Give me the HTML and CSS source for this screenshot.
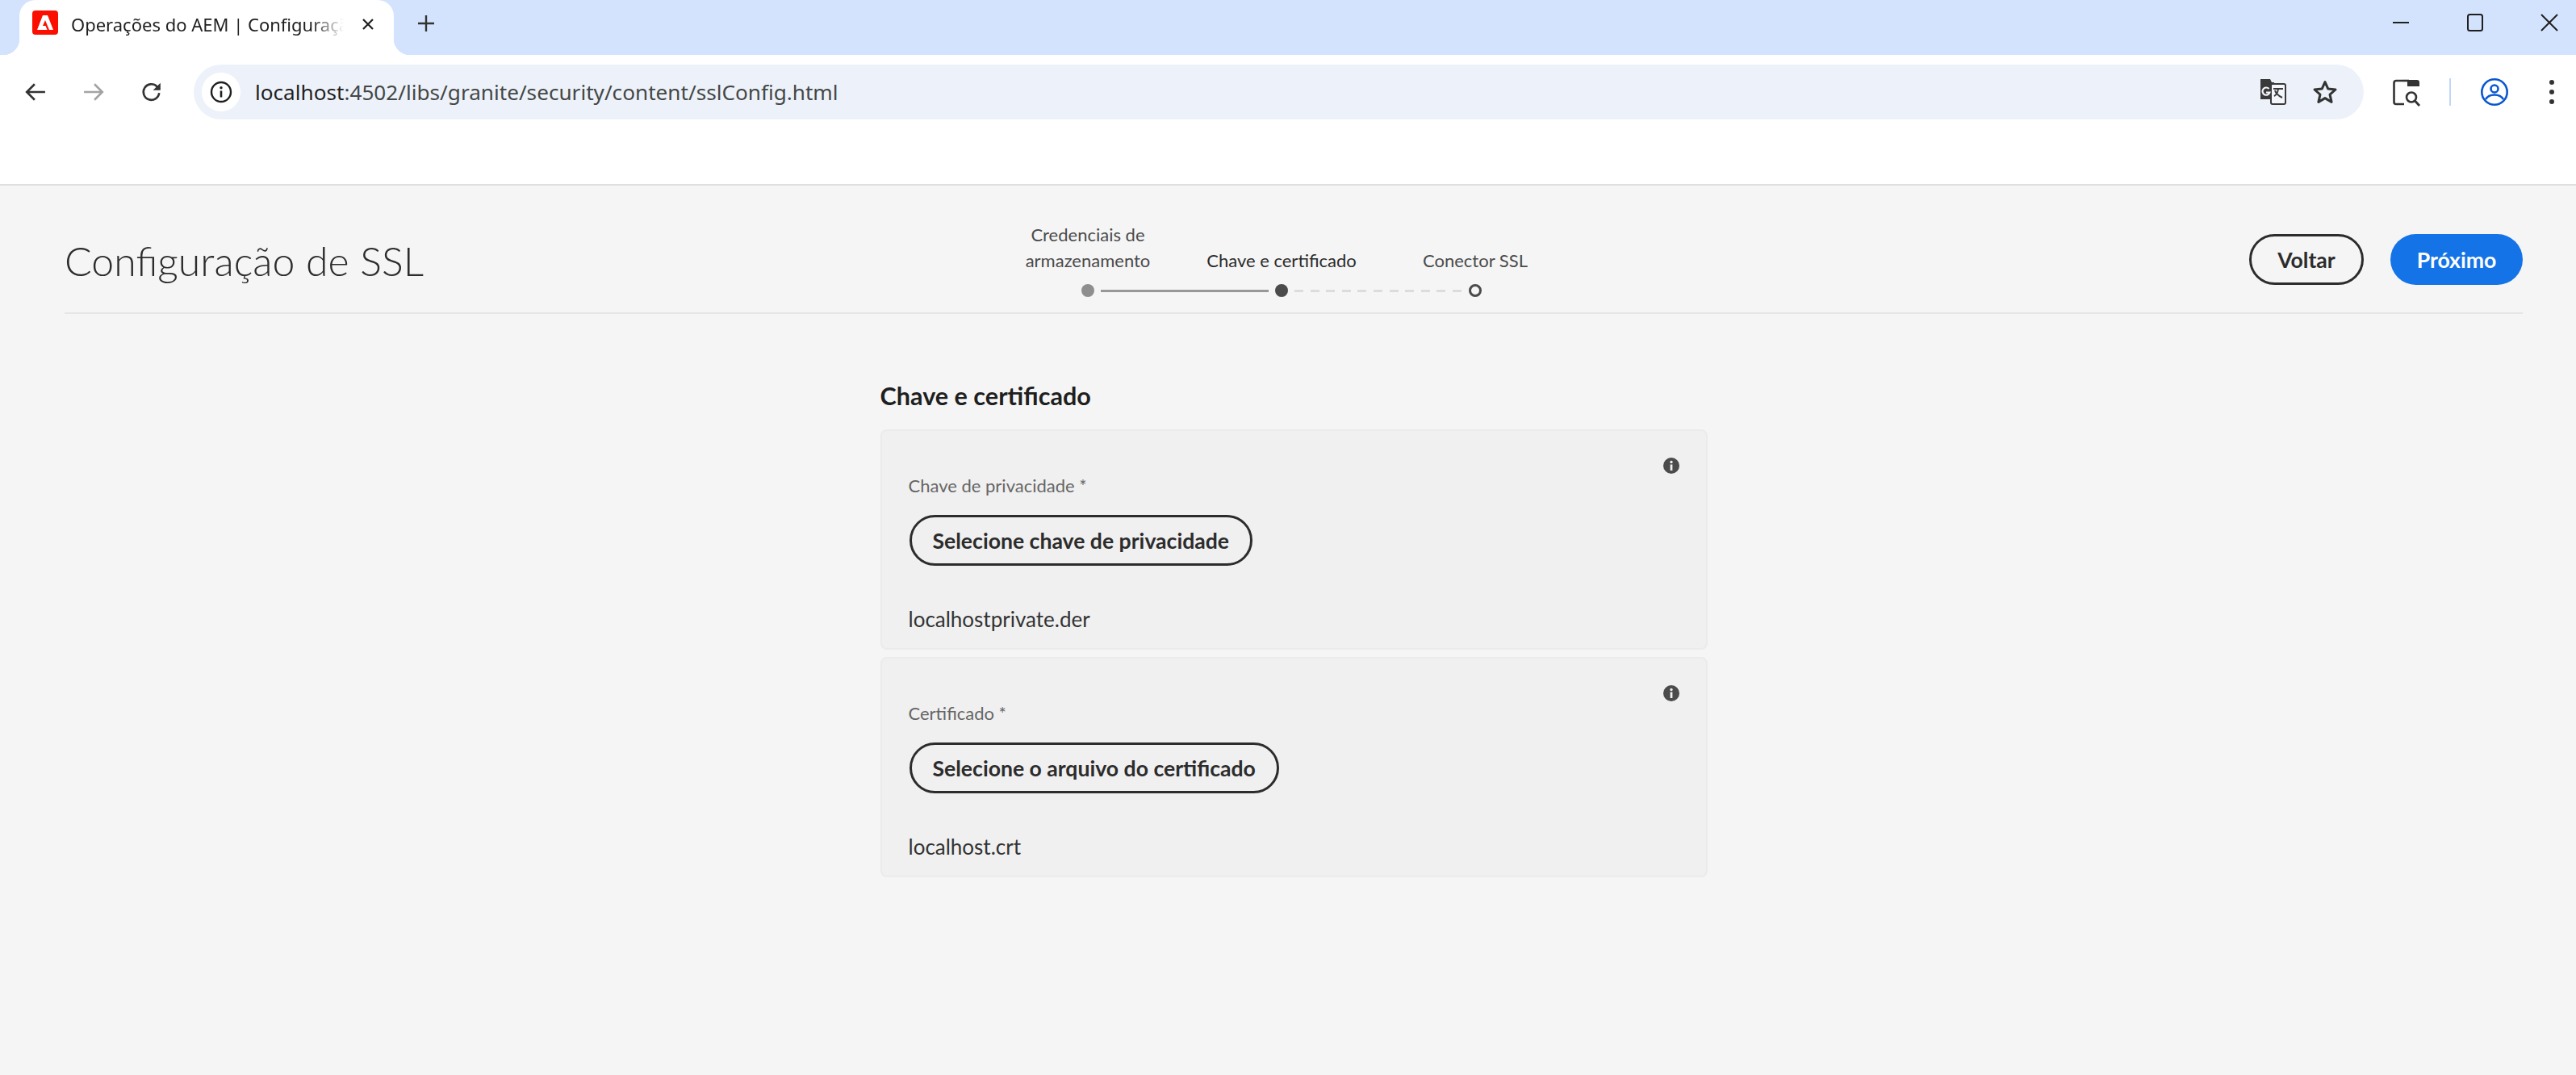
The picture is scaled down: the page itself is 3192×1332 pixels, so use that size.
FILE: index.html
```html
<!DOCTYPE html>
<html lang="pt">
<head>
    <meta charset="UTF-8">
    <title>Operações do AEM | Configuração de SSL</title>
    <link rel="stylesheet" href="styles.css">
</head>
<body>

    <!-- barra de abas -->
    <div class="tabstrip">
        <div class="tab">
            <svg class="favicon" viewBox="0 0 32 30">
                <rect width="32" height="30" rx="4" fill="#fa0f00"/>
                <path d="M13 6h6l7 18h-5L16 12l-3 7h3.500l2 5H6z" fill="#fff"/>
            </svg>
            <span class="tab-title">Operações do AEM | Configuração de SSL</span>
            <svg class="tab-close" viewBox="0 0 16 16"><path d="M2 2l12 12M14 2 2 14" stroke="#1f1f1f" stroke-width="2.2" fill="none"/></svg>
        </div>
        <svg class="new-tab" viewBox="0 0 24 24"><path d="M12 2v20M2 12h20" stroke="#333" stroke-width="2.4" fill="none"/></svg>
        <div class="window-controls">
            <svg viewBox="0 0 24 24"><path d="M2 12h20" stroke="#1f1f1f" stroke-width="2" fill="none"/></svg>
            <svg viewBox="0 0 24 24"><rect x="3" y="2" width="18" height="20" rx="2.5" stroke="#1f1f1f" stroke-width="2" fill="none"/></svg>
            <svg viewBox="0 0 24 24"><path d="M2 2l20 20M22 2 2 22" stroke="#1f1f1f" stroke-width="2" fill="none"/></svg>
        </div>
    </div>

    <!-- barra de endereco -->
    <div class="toolbar">
        <div class="nav-btn">
            <svg viewBox="0 0 24 24"><path d="M23 12H3M11 3l-9 9 9 9" stroke="#333" stroke-width="2.4" fill="none"/></svg>
        </div>
        <div class="nav-btn">
            <svg viewBox="0 0 24 24"><path d="M1 12h20M13 3l9 9-9 9" stroke="#a3a3a3" stroke-width="2.4" fill="none"/></svg>
        </div>
        <div class="nav-btn">
            <svg viewBox="0 0 24 24"><path d="M20.5 13a9 9 0 1 1-2.600-7.300L21 8.500" stroke="#333" stroke-width="2.4" fill="none"/><path d="M22 1.500V10h-8.500z" fill="#333"/></svg>
        </div>
        <div class="urlbar">
            <div class="site-info">
                <svg viewBox="0 0 28 28"><circle cx="14" cy="14" r="12" stroke="#1f1f1f" stroke-width="2.400" fill="none"/><path d="M14 12.500v8" stroke="#1f1f1f" stroke-width="2.600"/><circle cx="14" cy="8.800" r="1.700" fill="#1f1f1f"/></svg>
            </div>
            <span class="url"><span class="host">localhost</span>:4502/libs/granite/security/content/sslConfig.html</span>
            <div class="url-actions">
                <svg class="translate-icon" viewBox="0 0 34 36">
                    <path d="M1 2h12l2 4h3v21H1z" fill="#3a3a3a"/>
                    <rect x="14" y="8" width="18" height="25" rx="2" fill="#f4f6fb" stroke="#3a3a3a" stroke-width="2"/>
                    <path d="M1 8h13v19H1z" fill="#3a3a3a"/>
                    <path d="M11.500 14a4.600 4.600 0 1 0 1 4.500H8" stroke="#f4f6fb" stroke-width="2.200" fill="none"/>
                    <path d="M17 14h12M23 14c-.5 5-3 8-5 9M19 16c1 4 5 7 9 9" stroke="#3a3a3a" stroke-width="2" fill="none"/>
                </svg>
                <svg class="star-icon" viewBox="0 0 32 32"><path d="M16 3.500l3.800 8.600 9.200.9-7 6.200 2.100 9.200L16 23.600l-8.100 4.800L10 19.200 3 13l9.200-.9z" stroke="#333" stroke-width="3" stroke-linejoin="round" fill="none"/></svg>
            </div>
        </div>
        <div class="tool-btn tool-lens">
            <svg viewBox="0 0 36 36">
                <path d="M13 4H5a2.500 2.500 0 0 0-2.500 2.500v24A2.500 2.500 0 0 0 5 33h10" stroke="#333" stroke-width="2.600" fill="none"/>
                <path d="M19 3h12a3 3 0 0 1 3 3v5H19z" fill="#333"/>
                <path d="M13 4h8" stroke="#333" stroke-width="2.600"/>
                <circle cx="24" cy="24.500" r="6" stroke="#333" stroke-width="2.600" fill="none"/>
                <path d="M28.500 29l5.500 6" stroke="#333" stroke-width="2.800"/>
            </svg>
        </div>
        <div class="tool-sep"></div>
        <div class="tool-btn tool-profile">
            <svg viewBox="0 0 36 36">
                <circle cx="18" cy="18" r="15.700" stroke="#0b57d0" stroke-width="2.600" fill="none"/>
                <circle cx="18" cy="14" r="4.500" stroke="#0b57d0" stroke-width="2.600" fill="none"/>
                <path d="M7 27c3-5 7-5.500 11-5.500s8 .5 11 5.500" stroke="#0b57d0" stroke-width="2.600" fill="none"/>
            </svg>
        </div>
        <div class="tool-btn tool-menu">
            <svg viewBox="0 0 36 36"><circle cx="18" cy="6" r="3" fill="#333"/><circle cx="18" cy="18" r="3" fill="#333"/><circle cx="18" cy="30" r="3" fill="#333"/></svg>
        </div>
    </div>

    <!-- pagina do AEM -->
    <div class="page">
        <header class="wizard-header">
            <h1 class="wizard-title">Configuração de SSL</h1>
            <div class="stepper">
                <div class="step-labels">
                    <span>Credenciais de<br>armazenamento</span>
                    <span class="current">Chave e certificado</span>
                    <span>Conector SSL</span>
                </div>
                <div class="step-track">
                    <span class="dot done"></span>
                    <span class="line solid"></span>
                    <span class="dot active"></span>
                    <span class="line dashed"></span>
                    <span class="dot todo"></span>
                </div>
            </div>
            <div class="wizard-actions">
                <button type="button" class="btn btn-outline btn-back">Voltar</button>
                <button type="button" class="btn btn-primary">Próximo</button>
            </div>
        </header>

        <main class="content">
            <h2 class="section-title">Chave e certificado</h2>

            <section class="card">
                <div class="card-info">
                    <svg class="info-icon" viewBox="0 0 20 20"><circle cx="10" cy="10" r="10" fill="#4b4b4b"/><rect x="8.600" y="8.500" width="2.800" height="7.500" fill="#f0f0f0"/><circle cx="10" cy="5.500" r="1.700" fill="#f0f0f0"/></svg>
                </div>
                <label class="field-label">Chave de privacidade *</label>
                <button type="button" class="btn btn-outline btn-file">Selecione chave de privacidade</button>
                <div class="file-name">localhostprivate.der</div>
            </section>

            <section class="card">
                <div class="card-info">
                    <svg class="info-icon" viewBox="0 0 20 20"><circle cx="10" cy="10" r="10" fill="#4b4b4b"/><rect x="8.600" y="8.500" width="2.800" height="7.500" fill="#f0f0f0"/><circle cx="10" cy="5.500" r="1.700" fill="#f0f0f0"/></svg>
                </div>
                <label class="field-label">Certificado *</label>
                <button type="button" class="btn btn-outline btn-file">Selecione o arquivo do certificado</button>
                <div class="file-name">localhost.crt</div>
            </section>
        </main>
    </div>

</body>
</html>
```

FILE: styles.css
```css
body {
    font-family: 'Lato', 'Open Sans', sans-serif;
    margin: 0;
    padding: 0;
    height: 100vh;
    background-color: #f5f5f5;
    color: #2c2c2c;
    overflow: hidden;
}

/* barra de abas */
.tabstrip {
    display: flex;
    align-items: center;
    height: 68px;
    padding-left: 24px;
    background-color: #d3e3fd;
}

.tab {
    position: relative;
    display: flex;
    align-items: center;
    box-sizing: border-box;
    width: 464px;
    height: 68px;
    padding: 0 24px 8px 16px;
    background-color: #ffffff;
    border-radius: 20px 20px 0 0;
}

/* cantos curvos da aba */
.tab::before,
.tab::after {
    content: "";
    position: absolute;
    bottom: 0;
    width: 20px;
    height: 20px;
}

.tab::before {
    left: -20px;
    background: radial-gradient(circle at 0 0, #d3e3fd 20px, #ffffff 20.5px);
}

.tab::after {
    right: -20px;
    background: radial-gradient(circle at 100% 0, #d3e3fd 20px, #ffffff 20.5px);
}

.favicon {
    flex: none;
    width: 32px;
    height: 30px;
    margin-bottom: 4px;
}

.tab-title {
    flex: 1;
    margin-left: 16px;
    font-family: 'Noto Sans', sans-serif;
    font-size: 22px;
    color: #1f1f1f;
    white-space: nowrap;
    overflow: hidden;
    -webkit-mask-image: linear-gradient(to right, #000 88%, transparent 100%);
    mask-image: linear-gradient(to right, #000 88%, transparent 100%);
}

.tab-close {
    flex: none;
    width: 16px;
    height: 16px;
    margin-left: 22px;
}

.new-tab {
    width: 24px;
    height: 24px;
    margin: 0 0 10px 28px;
}

.window-controls {
    display: flex;
    gap: 68px;
    margin-left: auto;
    padding: 0 21px 12px 0;
}

.window-controls svg {
    width: 24px;
    height: 24px;
}

/* barra de endereco */
.toolbar {
    display: flex;
    align-items: flex-start;
    box-sizing: border-box;
    height: 162px;
    padding: 12px 0 0 8px;
    background-color: #ffffff;
    border-bottom: 2px solid #dfdfdf;
}

.nav-btn {
    display: flex;
    align-items: center;
    justify-content: center;
    width: 72px;
    height: 68px;
}

.nav-btn svg {
    width: 26px;
    height: 26px;
}

.urlbar {
    display: flex;
    align-items: center;
    box-sizing: border-box;
    width: 2689px;
    height: 68px;
    margin-left: 16px;
    padding: 0 32px 0 10px;
    background-color: #edf2fa;
    border-radius: 34px;
}

.site-info {
    display: flex;
    align-items: center;
    justify-content: center;
    width: 48px;
    height: 48px;
    background-color: #ffffff;
    border-radius: 50%;
}

.site-info svg {
    width: 28px;
    height: 28px;
}

.url {
    margin-left: 18px;
    font-family: 'Noto Sans', sans-serif;
    font-size: 26.15px;
    color: #444746;
    white-space: nowrap;
}

.host {
    color: #1f1f1f;
}

.url-actions {
    display: flex;
    align-items: center;
    gap: 31px;
    margin-left: auto;
}

.translate-icon {
    width: 34px;
    height: 36px;
}

.star-icon {
    width: 32px;
    height: 32px;
}

.tool-btn {
    display: flex;
    align-items: center;
    justify-content: center;
    width: 56px;
    height: 68px;
}

.tool-btn svg {
    width: 36px;
    height: 36px;
}

.tool-lens {
    margin-left: 25px;
}

.tool-sep {
    width: 2px;
    height: 34px;
    margin: 17px 0 0 25px;
    background-color: #c2d7f8;
}

.tool-profile {
    margin-left: 26px;
}

.tool-menu {
    margin-left: 15px;
}

/* pagina */
.page {
    padding: 0 66px 0 80px;
}

.wizard-header {
    display: flex;
    align-items: flex-start;
    padding: 45px 0 19px;
    border-bottom: 2px solid #e6e6e6;
}

.wizard-title {
    flex: 0 0 1148px;
    margin: 13px 0 0;
    font-size: 50px;
    font-weight: 300;
    line-height: 70px;
    color: #2c2c2c;
}

.stepper {
    width: 720px;
    font-size: 22px;
    color: #4b4b4b;
}

.step-labels {
    display: grid;
    grid-template-columns: repeat(3, 240px);
    align-items: end;
    line-height: 32px;
    text-align: center;
}

.step-labels .current {
    color: #2c2c2c;
}

.step-track {
    display: flex;
    align-items: center;
    margin-top: 13px;
    padding-left: 112px;
}

.dot {
    box-sizing: border-box;
    width: 16px;
    height: 16px;
    border-radius: 50%;
}

.dot.done {
    background-color: #8e8e8e;
}

.dot.active {
    background-color: #4b4b4b;
}

.dot.todo {
    border: 3px solid #4b4b4b;
}

.line {
    width: 208px;
    height: 3px;
    margin: 0 8px;
}

.line.solid {
    background-color: #989898;
}

.line.dashed {
    background: repeating-linear-gradient(to right, #dcdcdc 0 11px, transparent 11px 19.6px);
}

.wizard-actions {
    display: flex;
    gap: 33px;
    margin: 15px 0 0 auto;
}

.btn {
    box-sizing: border-box;
    height: 63px;
    padding: 0;
    font-family: inherit;
    font-size: 26.6px;
    font-weight: 700;
    border-radius: 32px;
    cursor: pointer;
}

.btn-outline {
    background-color: transparent;
    border: 3px solid #2c2c2c;
    color: #2c2c2c;
}

.btn-primary {
    width: 164px;
    background-color: #1473e6;
    border: none;
    color: #ffffff;
}

.btn-back {
    width: 142px;
}

/* conteudo */
.content {
    width: 1025px;
    margin: 82px auto 0;
}

.section-title {
    margin: 0 0 21px;
    font-size: 30.6px;
    font-weight: 700;
    line-height: 40px;
    color: #1f1f1f;
}

.card {
    box-sizing: border-box;
    height: 273px;
    margin-bottom: 9px;
    padding: 33px 33px 0;
    background-color: #f0f0f0;
    border: 2px solid #ebebeb;
    border-radius: 8px;
}

.card-info {
    display: flex;
    justify-content: flex-end;
    height: 20px;
    padding-right: 0;
}

.info-icon {
    width: 20px;
    height: 20px;
}

.field-label {
    display: block;
    font-size: 22px;
    line-height: 30px;
    color: #666666;
}

.btn-file {
    display: block;
    margin: 21px 0 0 1px;
    padding: 0 26px;
}

.file-name {
    margin-top: 48px;
    font-size: 26px;
    line-height: 36px;
    color: #333333;
}
```
